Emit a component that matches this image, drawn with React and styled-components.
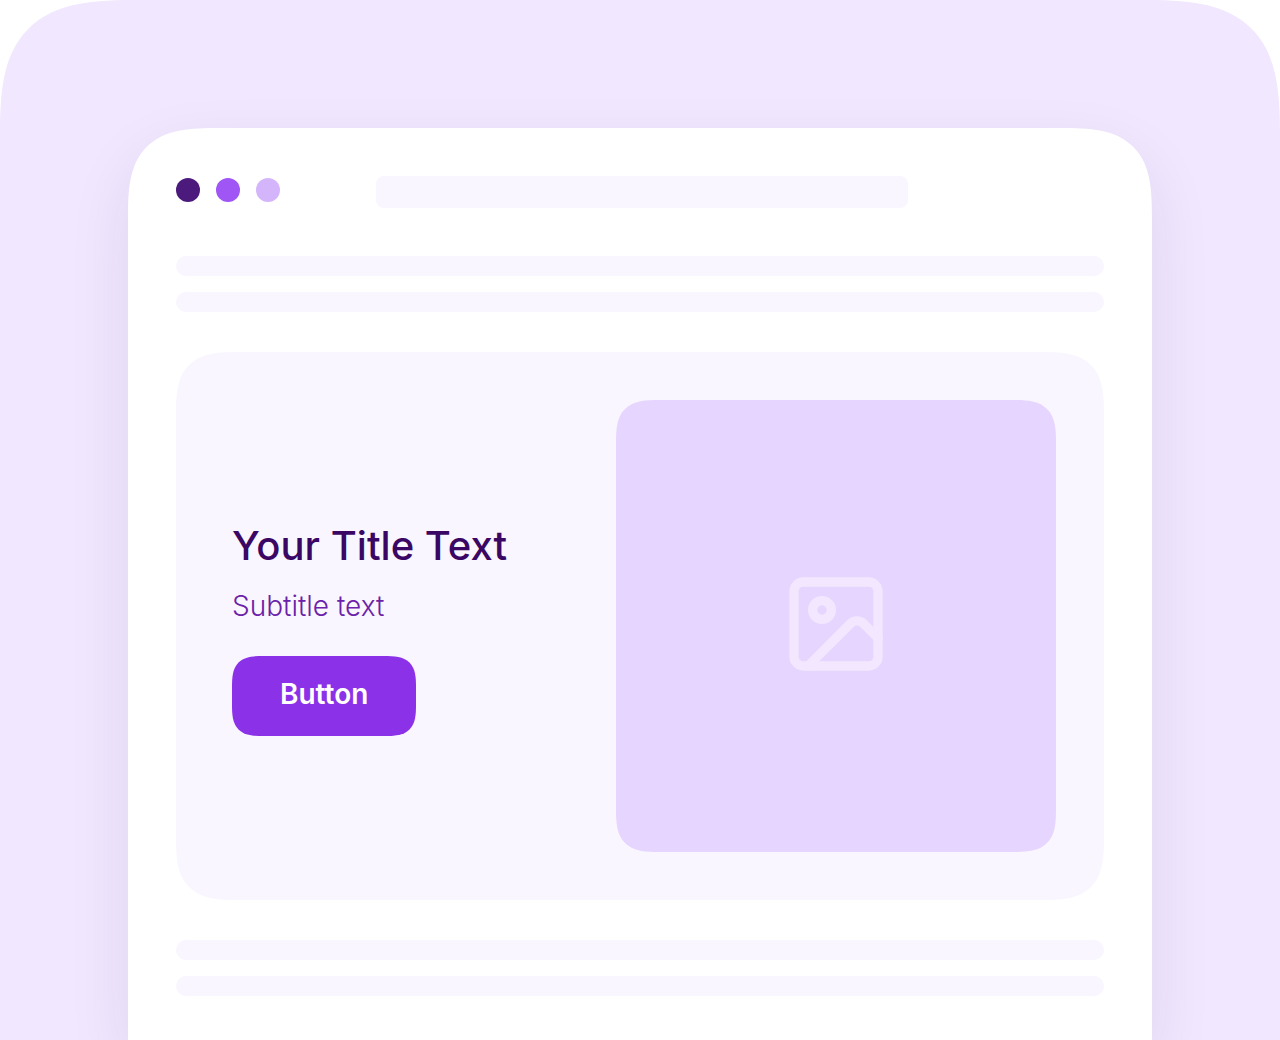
import React from "react";
import styled, { createGlobalStyle, css } from "styled-components";
import { Image } from "lucide-react";

const GlobalStyle = createGlobalStyle`
  *, *::before, *::after { box-sizing: border-box; }
  body { margin: 0; background: #ffffff; font-family: Inter, "Liberation Sans", sans-serif; }
`;

const smoothCorners = (round, smooth, sides = "all") => css`
  border-radius: ${sides === "top" ? `${round}px ${round}px 0 0` : `${round}px`};
  @supports (corner-shape: squircle) {
    border-radius: ${sides === "top" ? `${smooth}px ${smooth}px 0 0` : `${smooth}px`};
    corner-shape: superellipse(1.6);
  }
`;

const Stage = styled.main`
  display: flex;
  min-height: 100vh;
  padding: 128px 128px 0;
  overflow: hidden;
  background: #f1e7fe;
  ${smoothCorners(96, 140, "top")}
`;

const BrowserWindow = styled.section`
  flex: 1;
  min-width: 0;
  padding: 48px 48px 0;
  background: #ffffff;
  box-shadow: 0 24px 64px rgba(40, 30, 110, 0.09);
  ${smoothCorners(64, 92, "top")}
`;

const Header = styled.header`
  display: flex;
  gap: 96px;
  padding-right: 196px;
`;

const Dots = styled.div`
  display: flex;
  align-items: center;
  gap: 16px;
  height: 28px;
`;

const Dot = styled.span`
  width: 24px;
  height: 24px;
  border-radius: 50%;
  background: ${(p) => p.$color};
`;

const AddressBar = styled.div`
  flex: 1;
  height: 32px;
  border-radius: 8px;
  background: #f9f6ff;
`;

const Lines = styled.div`
  display: grid;
  gap: 16px;
  margin-top: ${(p) => p.$top}px;
`;

const Line = styled.div`
  height: 20px;
  border-radius: 10px;
  background: #f9f6ff;
`;

const Card = styled.article`
  display: grid;
  grid-template-columns: 384fr 440fr;
  align-items: center;
  margin-top: 40px;
  padding: 48px 48px 48px 56px;
  background: #f9f6ff;
  ${smoothCorners(48, 64)}
`;

const Title = styled.h1`
  margin: 0 0 8px;
  color: #3b0764;
  font-size: 40px;
  font-weight: 500;
  line-height: 60px;
`;

const Subtitle = styled.p`
  margin: 0 0 28px;
  color: #6b21a8;
  font-size: 28px;
  font-weight: 300;
  line-height: 44px;
`;

const Button = styled.button`
  padding: 16px 48px 20px;
  border: 0;
  background: #8b32e8;
  color: #ffffff;
  font-family: inherit;
  font-size: 28px;
  font-weight: 600;
  line-height: 44px;
  cursor: pointer;
  ${smoothCorners(24, 32)}
`;

const Picture = styled.div`
  display: grid;
  place-items: center;
  height: 452px;
  padding-bottom: 4px;
  background: #e6d5fe;
  color: #f2e7fe;
  ${smoothCorners(32, 44)}
`;

export default function App() {
  return (
    <>
      <GlobalStyle />
      <Stage>
        <BrowserWindow>
          <Header>
            <Dots>
              <Dot $color="#4c1a7c" />
              <Dot $color="#a056f5" />
              <Dot $color="#d4b5fc" />
            </Dots>
            <AddressBar />
          </Header>
          <Lines $top={48}>
            <Line />
            <Line />
          </Lines>
          <Card>
            <div>
              <Title>Your Title Text</Title>
              <Subtitle>Subtitle text</Subtitle>
              <Button type="button">Button</Button>
            </div>
            <Picture>
              <Image size={112} strokeWidth={2} aria-hidden="true" />
            </Picture>
          </Card>
          <Lines $top={40}>
            <Line />
            <Line />
          </Lines>
        </BrowserWindow>
      </Stage>
    </>
  );
}
